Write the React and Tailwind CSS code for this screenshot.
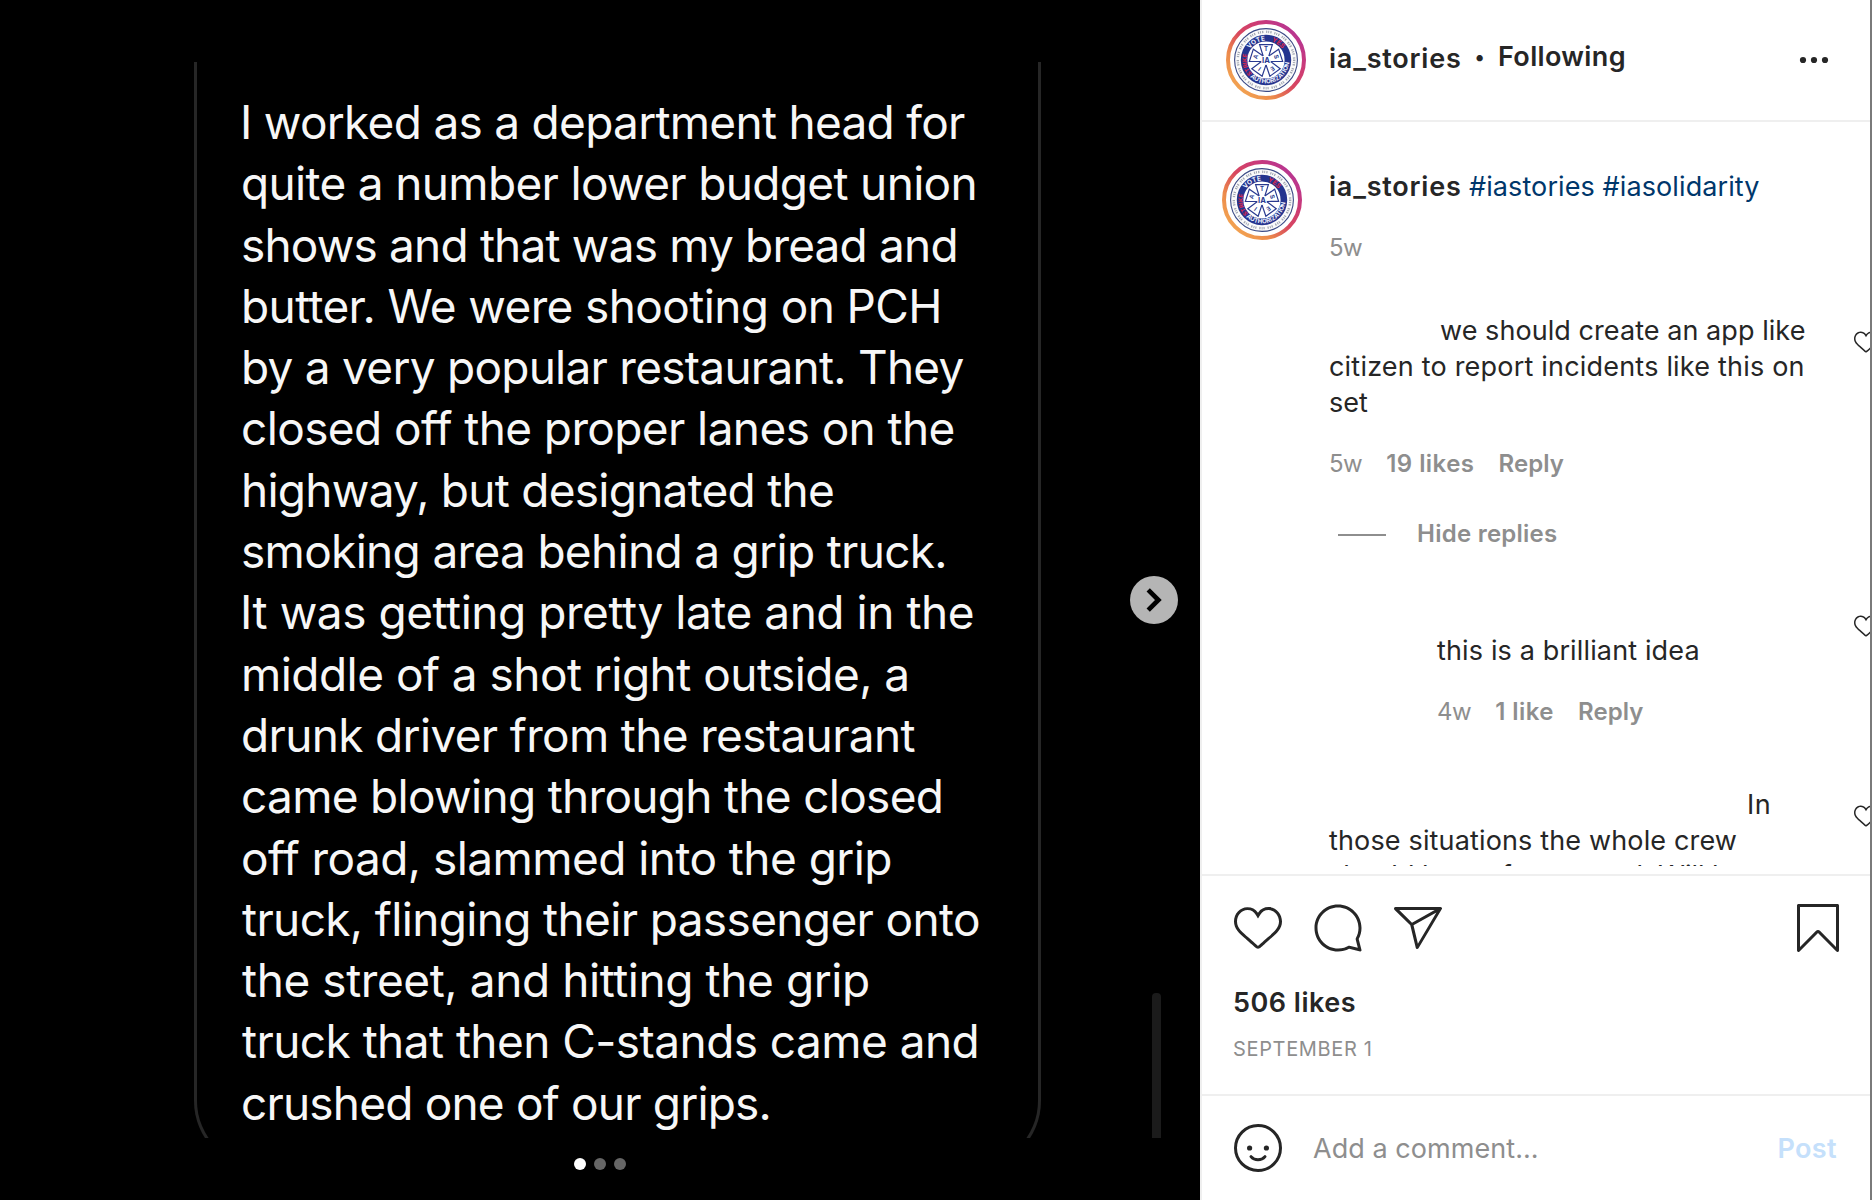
import React from "react";

const STORY_LINES = [
  ["I worked as a department head for", "tracking-[-0.72px] ml-[-1px]"],
  ["quite a number lower budget union", "tracking-[-0.67px]"],
  ["shows and that was my bread and", "tracking-[-0.83px]"],
  ["butter. We were shooting on PCH", "tracking-[-0.62px]"],
  ["by a very popular restaurant. They", "tracking-[-0.745px]"],
  ["closed off the proper lanes on the", "tracking-[-0.61px]"],
  ["highway, but designated the", "tracking-[-0.745px]"],
  ["smoking area behind a grip truck.", "tracking-[-0.685px]"],
  ["It was getting pretty late and in the", "tracking-[-0.46px] ml-[-1px]"],
  ["middle of a shot right outside, a", "tracking-[-0.54px]"],
  ["drunk driver from the restaurant", "tracking-[-0.665px]"],
  ["came blowing through the closed", "tracking-[-0.7px]"],
  ["off road, slammed into the grip", "tracking-[-0.56px]"],
  ["truck, flinging their passenger onto", "tracking-[-0.645px] ml-[1px]"],
  ["the street, and hitting the grip", "tracking-[-0.42px] ml-[1px]"],
  ["truck that then C-stands came and", "tracking-[-0.565px] ml-[1px]"],
  ["crushed one of our grips.", "tracking-[-0.815px]"],
];

const HEART =
  "M34.6 6.1c5.7 0 10.4 5.2 10.4 11.5 0 6.8-5.9 11-11.5 16S25 41.3 24 41.9c-1.1-.7-4.7-4-9.5-8.3-5.7-5-11.5-9.2-11.5-16C3 11.3 7.7 6.1 13.4 6.1c4.2 0 6.5 2 8.1 4.3 1.9 2.6 2.2 3.9 2.5 3.9.3 0 .6-1.3 2.5-3.9 1.6-2.3 3.9-4.3 8.1-4.3m0-3c-4.5 0-7.9 1.8-10.6 5.6-2.7-3.7-6.1-5.5-10.6-5.5C6 3.1 0 9.6 0 17.6c0 7.3 5.4 12 10.6 16.5.6.5 1.3 1.1 1.9 1.7l2.3 2c4.4 3.9 6.6 5.9 7.6 6.5.5.3 1.1.5 1.6.5.6 0 1.1-.2 1.6-.5 1-.6 2.8-2.2 7.8-6.8l2-1.8c.7-.6 1.3-1.2 2-1.7C42.7 29.6 48 25 48 17.6c0-8-6-14.5-13.4-14.5z";
const COMMENT =
  "M47.5 46.1l-2.8-11c1.8-3.3 2.8-7.1 2.8-11.1C47.5 11 37 .5 24 .5S.5 11 .5 24 11 47.5 24 47.5c4 0 7.8-1 11.1-2.8l11 2.8c.8.2 1.6-.6 1.4-1.4zm-3-22.1c0 4-1 7-2.6 10-.2.4-.3.9-.2 1.4l2.1 8.4-8.3-2.1c-.5-.1-1-.1-1.4.2-1.8 1-5.2 2.6-10 2.6-11.4 0-20.6-9.2-20.6-20.5S12.7 3.5 24 3.5 44.5 12.7 44.5 24z";
const SHARE =
  "M47.8 3.8c-.3-.5-.8-.8-1.3-.8h-45C.9 3.1.3 3.5.1 4S0 5.2.4 5.7l15.9 15.6 5.5 22.6c.1.6.6 1 1.2 1.1h.2c.5 0 1-.3 1.3-.7l23.2-39c.4-.4.4-1 .1-1.5zM5.2 6.1h35.5L18 18.7 5.2 6.1zm18.7 33.6l-4.4-18.4L42.4 8.6 23.9 39.7z";
const BOOKMARK =
  "M43.5 48c-.4 0-.8-.2-1.1-.4L24 29 5.6 47.6c-.4.4-1.1.6-1.6.3-.6-.2-1-.8-1-1.4v-45C3 .7 3.7 0 4.5 0h39c.8 0 1.5.7 1.5 1.5v45c0 .6-.4 1.2-.9 1.4-.2.1-.4.1-.6.1zM24 26c.8 0 1.6.3 2.2.9l15.8 16V3H6v39.9l15.8-16c.6-.6 1.4-.9 2.2-.9z";

function Icon({ d, className }) {
  return (
    <svg viewBox="0 0 48 48" fill="#262626" className={className}>
      <path d={d} />
    </svg>
  );
}

function SmileIcon() {
  return (
    <svg viewBox="0 0 48 48" className="size-12 shrink-0">
      <circle cx="24" cy="24" r="22.5" fill="none" stroke="#262626" strokeWidth="3" />
      <circle cx="15.6" cy="24" r="2.6" fill="#262626" />
      <circle cx="32.4" cy="24" r="2.6" fill="#262626" />
      <path d="M17 32.6c1 1.2 3.4 3.2 7 3.2s6-2 7-3.2" fill="none" stroke="#262626" strokeWidth="3" strokeLinecap="round" />
    </svg>
  );
}

const ARMS = [
  [0, "T"],
  [72, "S"],
  [144, "E"],
  [216, "I"],
  [288, "A"],
];

function Avatar({ id }) {
  return (
    <svg viewBox="0 0 80 80" className="size-20 shrink-0">
      <defs>
        <linearGradient id={`${id}-ring`} x1="0.1" y1="0.9" x2="0.9" y2="0.1">
          <stop offset="0" stopColor="#f3a653" />
          <stop offset="0.25" stopColor="#ec8a4b" />
          <stop offset="0.5" stopColor="#d8475f" />
          <stop offset="0.75" stopColor="#cb3a78" />
          <stop offset="1" stopColor="#b53594" />
        </linearGradient>
        <path id={`${id}-top`} d="M20.5 40a19.5 19.5 0 0 1 39 0" />
        <path id={`${id}-low`} d="M16.8 37a23.4 23.4 0 1 0 43.5 -8.7" />
        <path id={`${id}-left`} d="M31 57.3a19.5 19.5 0 0 1 -8.5 -26" />
      </defs>
      <circle cx="40" cy="40" r="38" fill="#fff" stroke={`url(#${id}-ring)`} strokeWidth="4" />
      <circle cx="40" cy="40" r="31.4" fill="#fafafa" stroke="#3b4a86" strokeWidth="1.1" />
      <circle cx="40" cy="40" r="28.2" fill="none" stroke="#a3a8b4" strokeWidth="2.4" strokeDasharray="1.2 0.9 1 1.1 1.3 2.8" />
      <circle cx="40" cy="40" r="21.9" fill="#fff" stroke="#24348f" strokeWidth="6.6" />
      <g fontFamily="Inter, sans-serif" fontWeight="700" fontSize="6.6">
        <text fill="#eef1fc">
          <textPath href={`#${id}-top`} startOffset="11.5">VOTE</textPath>
        </text>
        <text fill="#e02848">
          <textPath href={`#${id}-top`} startOffset="36">YES</textPath>
        </text>
        <text fill="#eef1fc" fontSize="6.2">
          <textPath href={`#${id}-low`} startOffset="22">AUTHORIZATION</textPath>
        </text>
        <text fill="#e02848" fontSize="5.8">
          <textPath href={`#${id}-left`} startOffset="6">STRIKE</textPath>
        </text>
      </g>
      <g stroke="#2a3a90" strokeWidth="1.2" fill="#fff">
        {ARMS.map(([angle]) => (
          <path key={angle} d="M37.3 36.5L33.6 24.6H46.4L42.7 36.5z" transform={`rotate(${angle} 40 40)`} />
        ))}
      </g>
      <circle cx="40" cy="40" r="5" fill="#fff" />
      <g fontFamily="Inter, sans-serif" fontWeight="700" fill="#2a3a90" textAnchor="middle">
        {ARMS.map(([angle, letter]) => (
          <text key={angle} x="40" y="31.2" fontSize="6" transform={`rotate(${angle} 40 40)`}>
            {letter}
          </text>
        ))}
        <text x="40" y="42.8" fontSize="7.6">
          IA
        </text>
      </g>
    </svg>
  );
}

function Meta({ age, likes, className }) {
  return (
    <div className={`flex gap-6 text-[24px] leading-7 text-[#8e8e8e] ${className}`}>
      <span className="tracking-[-0.5px]">{age}</span>
      <span className="font-semibold tracking-[0.45px]">{likes}</span>
      <span className="font-semibold tracking-[0.1px]">Reply</span>
    </div>
  );
}

function PostMedia() {
  return (
    <section className="relative h-[1200px] w-[1200px] shrink-0 overflow-hidden bg-black">
      <div className="mt-[62px] ml-[194px] h-[1076px] w-[847px] overflow-hidden">
        <div className="h-[1107px] rounded-b-[68px] border-x-[3px] border-b-[3px] border-[#262626] pt-[30px] pl-[44px]">
          {STORY_LINES.map(([line, fit]) => (
            <p key={line} className={`text-[46px] leading-[61.3px] whitespace-nowrap text-[#f7f7f7] ${fit}`}>
              {line}
            </p>
          ))}
        </div>
      </div>
      <div className="absolute top-[993px] left-[1152px] h-[145px] w-[9px] rounded-t-[4px] bg-[#1b1b1b]" />
      <button className="absolute top-[576px] left-[1130px] size-12 rounded-full bg-[#b5b5b5]">
        <svg viewBox="0 0 48 48" className="size-12">
          <path d="M18.2 13.8L28.4 24L18.2 34.2" fill="none" stroke="#000" strokeWidth="4.7" />
        </svg>
      </button>
      <div className="mt-5 flex justify-center gap-2">
        <span className="size-3 rounded-full bg-white" />
        <span className="size-3 rounded-full bg-[#666]" />
        <span className="size-3 rounded-full bg-[#666]" />
      </div>
    </section>
  );
}

function Header() {
  return (
    <header className="flex h-[122px] shrink-0 items-start border-b-2 border-[#efefef] pr-[41px] pl-6 text-[27px] leading-9">
      <div className="pt-5">
        <Avatar id="head" />
      </div>
      <span className="mt-[41px] ml-[23px] w-[134px] font-semibold tracking-[0.8px]">ia_stories</span>
      <span className="mt-[39px] w-[33px] text-center text-[20px]">•</span>
      <span className="mt-[39px] ml-0.5 font-semibold tracking-[0.35px]">Following</span>
      <svg viewBox="0 0 30 8" className="mt-14 ml-auto h-2 w-[30px]" fill="#262626">
        <circle cx="4" cy="4" r="3.1" />
        <circle cx="15" cy="4" r="3.1" />
        <circle cx="26" cy="4" r="3.1" />
      </svg>
    </header>
  );
}

function Comments() {
  return (
    <div className="h-[744px] shrink-0 overflow-hidden text-[27px] leading-9">
      <article className="flex pt-[38px] pl-5">
        <Avatar id="caption" />
        <div className="ml-[27px] pt-[9px]">
          <p className="whitespace-nowrap">
            <span className="inline-block w-[140px] font-semibold tracking-[0.8px]">ia_stories</span>
            <span className="tracking-[0.1px] text-[#00376b]">#iastories #iasolidarity</span>
          </p>
          <p className="mt-[29px] text-[24px] leading-7 tracking-[-0.5px] text-[#8e8e8e]">5w</p>
        </div>
      </article>

      <article className="mt-[50px] flex">
        <div className="ml-[127px] w-[525px] shrink-0 pt-px">
          <p className="pl-[111px] tracking-[0.06px]">we should create an app like</p>
          <p className="tracking-[0.2px]">citizen to report incidents like this on</p>
          <p>set</p>
          <Meta age="5w" likes="19 likes" className="mt-[29px]" />
        </div>
        <Icon d={HEART} className="mt-[18px] size-6 shrink-0" />
      </article>

      <div className="mt-[42px] flex items-center pl-[136px] text-[24px] leading-7 font-semibold text-[#8e8e8e]">
        <span className="mt-0.5 h-0.5 w-12 bg-[#8e8e8e]" />
        <span className="ml-[31px] tracking-[0.25px]">Hide replies</span>
      </div>

      <article className="mt-[66px] flex">
        <div className="ml-[235px] w-[417px] shrink-0 pt-[19px]">
          <p className="tracking-[0.14px]">this is a brilliant idea</p>
          <Meta age="4w" likes="1 like" className="mt-[29px]" />
        </div>
        <Icon d={HEART} className="size-6 shrink-0" />
      </article>

      <article className="mt-[60px] flex">
        <div className="ml-[127px] w-[525px] shrink-0 pt-px whitespace-nowrap">
          <p className="pl-[418px] tracking-[0.5px]">In</p>
          <p className="tracking-[0.15px]">those situations the whole crew</p>
          <p className="leading-[34px]">should be on for our end. Will b</p>
        </div>
        <Icon d={HEART} className="mt-[18px] size-6 shrink-0" />
      </article>
    </div>
  );
}

function Actions() {
  return (
    <div className="h-[218px] shrink-0 pt-7 pr-7 pl-8">
      <div className="flex gap-8">
        <Icon d={HEART} className="size-12" />
        <Icon d={COMMENT} className="size-12" />
        <Icon d={SHARE} className="size-12" />
        <Icon d={BOOKMARK} className="ml-auto size-12" />
      </div>
      <p className="mt-[33px] ml-[-1px] text-[27px] leading-9 font-semibold tracking-[0.5px]">506 likes</p>
      <p className="mt-4 ml-[-1px] text-[20px] leading-6 tracking-[0.65px] text-[#8e8e8e]">SEPTEMBER 1</p>
    </div>
  );
}

function Composer() {
  return (
    <div className="flex flex-1 items-center border-t-2 border-[#efefef] pr-[33px] pl-8 text-[27px] leading-9">
      <SmileIcon />
      <span className="mt-0.5 ml-[31px] tracking-[0.05px] text-[#8e8e8e]">Add a comment...</span>
      <span className="mt-0.5 ml-auto font-semibold tracking-[0.4px] text-[#c5e0fb]">Post</span>
    </div>
  );
}

export default function App() {
  return (
    <main className="flex h-[1200px] w-[1872px] overflow-hidden bg-white font-[Inter,sans-serif] text-[#262626]">
      <PostMedia />
      <aside className="flex w-[672px] flex-col overflow-hidden border-r-2 border-l-2 border-r-[#7a7a7a] border-l-[#efefef]">
        <Header />
        <Comments />
        <div className="mt-2 h-0.5 shrink-0 bg-[#efefef]" />
        <Actions />
        <Composer />
      </aside>
    </main>
  );
}
